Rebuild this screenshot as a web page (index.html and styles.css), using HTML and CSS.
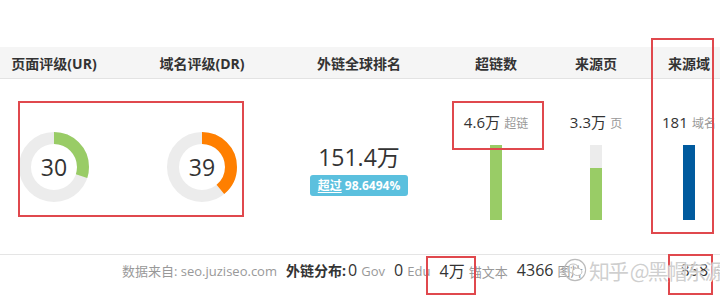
FILE: index.html
```html
<!DOCTYPE html>
<html lang="zh-CN">
<head>
<meta charset="utf-8">
<title>外链概览</title>
<link rel="stylesheet" href="styles.css">
</head>
<body>
<div class="page">
  <div class="table">
    <div class="th">页面评级(UR)</div>
    <div class="th">域名评级(DR)</div>
    <div class="th">外链全球排名</div>
    <div class="th">超链数</div>
    <div class="th">来源页</div>
    <div class="th">来源域</div>

    <div class="td donut-cell">
      <div class="donut">
        <svg viewBox="0 0 70 70" width="70" height="70">
          <circle cx="35" cy="35" r="29" class="ring-bg"/>
          <circle cx="35" cy="35" r="29" class="ring ring-green" stroke-dasharray="54.66 182.21" transform="rotate(-90 35 35)"/>
        </svg>
        <span class="donut-num">30</span>
      </div>
    </div>
    <div class="td donut-cell">
      <div class="donut">
        <svg viewBox="0 0 70 70" width="70" height="70">
          <circle cx="35" cy="35" r="29" class="ring-bg"/>
          <circle cx="35" cy="35" r="29" class="ring ring-orange" stroke-dasharray="71.06 182.21" transform="rotate(-90 35 35)"/>
        </svg>
        <span class="donut-num">39</span>
      </div>
    </div>
    <div class="td rank-cell">
      <div class="rank-num">151.4万</div>
      <div class="badge"><u>超过</u> 98.6494%</div>
    </div>
    <div class="td bar-cell">
      <div class="bar-label"><span class="val">4.6万</span> <span class="unit">超链</span></div>
      <div class="bar"><div class="fill green" style="height:100%"></div></div>
    </div>
    <div class="td bar-cell">
      <div class="bar-label"><span class="val">3.3万</span> <span class="unit">页</span></div>
      <div class="bar"><div class="fill green" style="height:70%"></div></div>
    </div>
    <div class="td bar-cell">
      <div class="bar-label"><span class="val">181</span> <span class="unit">域名</span></div>
      <div class="bar"><div class="fill blue" style="height:100%"></div></div>
    </div>
  </div>

  <div class="footer">
    <span class="src">数据来自: seo.juziseo.com</span>
    <span class="dist-title">外链分布:</span>
    <span class="item"><b>0</b> <i>Gov</i></span>
    <span class="item"><b>0</b> <i>Edu</i></span>
    <span class="item"><b>4万</b> <i>锚文本</i></span>
    <span class="item"><b>4366</b> <i>图片</i></span>
    <span class="item item-far"><b>858</b> <i>no</i></span>
  </div>

  <div class="mark mark-donuts"></div>
  <div class="mark mark-links"></div>
  <div class="mark mark-domains"></div>
  <div class="mark mark-anchor"></div>
  <div class="mark mark-nofollow"></div>

  <div class="watermark">
    <svg class="wm-icon" viewBox="0 0 26 26" width="24" height="24">
      <circle cx="13" cy="13" r="11.5" fill="none" stroke="#bbb" stroke-width="1.2"/>
      <ellipse cx="11" cy="11.5" rx="6" ry="5" fill="none" stroke="#bbb" stroke-width="1"/>
      <ellipse cx="15.5" cy="15" rx="5" ry="4" fill="#fff" stroke="#bbb" stroke-width="1"/>
      <circle cx="9" cy="10.5" r="0.9" fill="#bbb"/>
      <circle cx="13" cy="10.5" r="0.9" fill="#bbb"/>
    </svg>
    <span class="wm-text">知乎 @黑帽东源</span>
  </div>
</div>
</body>
</html>
```

FILE: styles.css
```css
html, body {
  margin: 0;
  padding: 0;
  background: #fff;
  overflow: hidden;
}

body {
  font-family: "Open Sans", "Noto Sans CJK SC", sans-serif;
  color: #333;
  width: 720px;
  height: 302px;
}

.page {
  position: relative;
  padding-top: 47px;
  height: 255px;
}

.table {
  display: grid;
  grid-template-columns: 148px 148px 166px 108px 92px 94px;
  margin-left: -20px;
  width: 756px;
}

.th {
  height: 31px;
  background: #f5f5f5;
  border-bottom: 1px solid #e3e3e3;
  display: flex;
  align-items: center;
  justify-content: center;
  font-weight: 700;
  font-size: 14px;
  color: #333;
  white-space: nowrap;
}

.td {
  height: 175px;
  display: flex;
  flex-direction: column;
  align-items: center;
}

.donut-cell {
  justify-content: center;
}

.donut {
  position: relative;
  width: 70px;
  height: 70px;
  margin-top: 1px;
}

.donut svg {
  display: block;
}

.ring-bg {
  fill: none;
  stroke: #ececec;
  stroke-width: 12;
}

.ring {
  fill: none;
  stroke-width: 12;
}

.ring-green { stroke: #99cc66; }
.ring-orange { stroke: #ff7f00; }

.donut-num {
  position: absolute;
  inset: 0;
  display: flex;
  align-items: center;
  justify-content: center;
  font-size: 23px;
  color: #333;
}

.rank-cell {
  justify-content: flex-start;
  padding-top: 64px;
  height: 111px;
}

.rank-num {
  font-size: 23px;
  line-height: 28px;
  color: #333;
}

.badge {
  margin-top: 4px;
  background: #5bc0de;
  color: #fff;
  font-weight: 700;
  font-size: 12px;
  line-height: 21px;
  padding: 0 8px;
  border-radius: 3px;
  white-space: nowrap;
}

.badge u {
  text-decoration-thickness: 1px;
  text-underline-offset: 2px;
}

.bar-cell {
  padding-top: 33px;
  height: 142px;
}

.bar-label {
  line-height: 20px;
  white-space: nowrap;
}

.bar-label .val {
  font-size: 15px;
  color: #333;
}

.bar-label .unit {
  font-size: 12px;
  color: #999;
}

.bar {
  margin-top: 11px;
  width: 12px;
  height: 75px;
  background: #ececec;
  display: flex;
  flex-direction: column;
  justify-content: flex-end;
}

.fill.green { background: #99cc66; }
.fill.blue { background: #005a9e; }

.footer {
  border-top: 1px solid #e5e5e5;
  height: 30px;
  display: flex;
  align-items: center;
  padding-left: 122px;
  white-space: nowrap;
  overflow: hidden;
  gap: 9px;
}

.src {
  font-size: 13px;
  color: #999;
  margin-right: 0;
}

.dist-title {
  font-size: 14px;
  font-weight: 700;
  color: #333;
  margin-right: -7px;
}

.item b {
  font-weight: 400;
  font-size: 16px;
  color: #333;
}

.item i {
  font-style: normal;
  font-size: 13px;
  color: #999;
}

.item-far {
  margin-left: 88px;
}

.mark {
  position: absolute;
  border: 2px solid #e0484d;
  box-sizing: border-box;
}

.mark-donuts { left: 18px; top: 101px; width: 226px; height: 116px; }
.mark-links { left: 452px; top: 101px; width: 92px; height: 49px; }
.mark-domains { left: 651px; top: 38px; width: 63px; height: 196px; }
.mark-anchor { left: 426px; top: 256px; width: 50px; height: 39px; }
.mark-nofollow { left: 668px; top: 254px; width: 45px; height: 41px; }

.watermark {
  position: absolute;
  left: 563px;
  top: 255px;
  display: flex;
  align-items: center;
  gap: 2px;
  white-space: nowrap;
}

.wm-icon {
  display: block;
}

.wm-text {
  font-size: 21px;
  color: rgba(160, 160, 160, 0.5);
  text-shadow: 0 0 1px #fff, 1px 1px 0 rgba(255,255,255,0.8);
  font-family: "Noto Sans CJK SC", sans-serif;
  letter-spacing: -2px;
}
```
